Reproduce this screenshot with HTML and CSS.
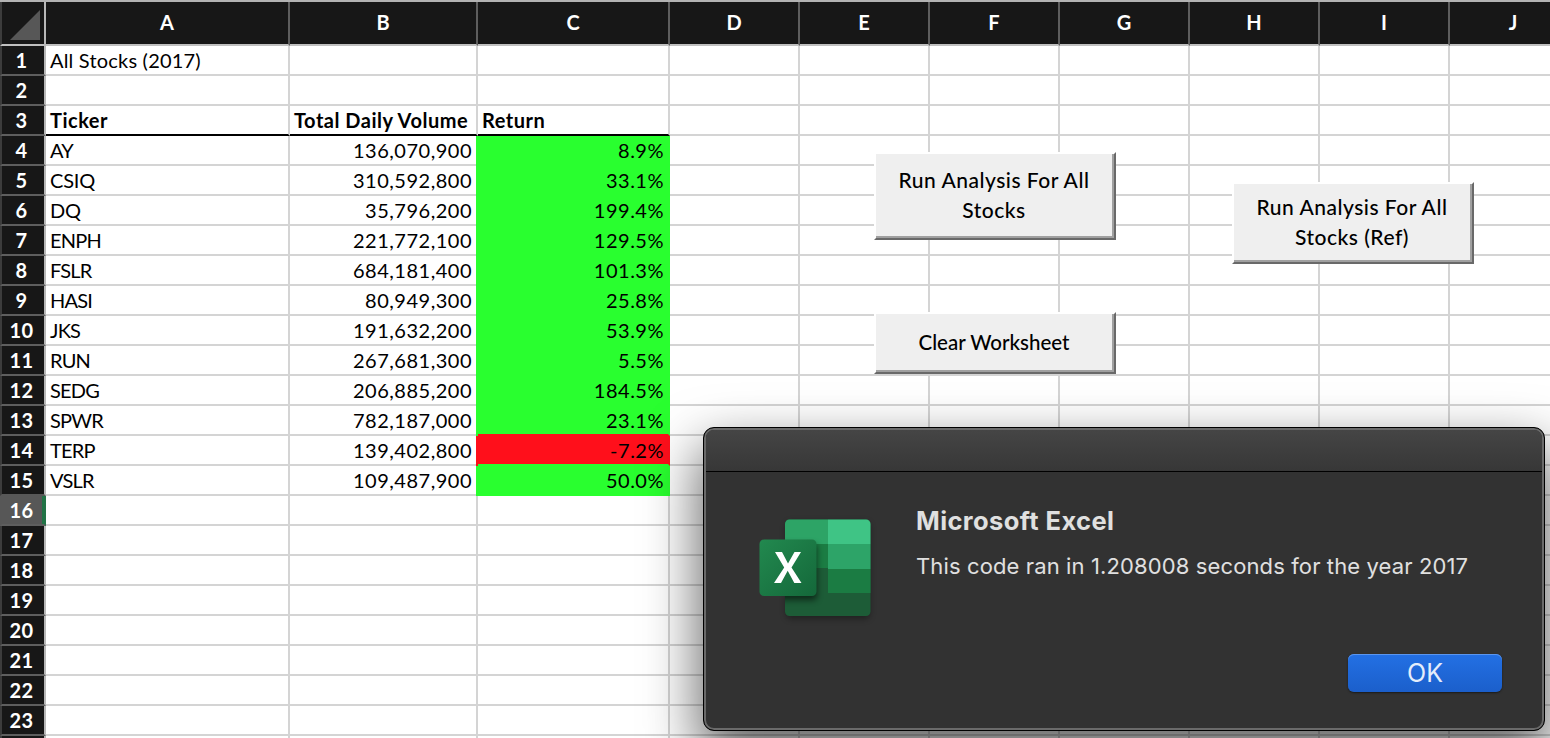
FILE: index.html
```
<!DOCTYPE html>
<html lang="en">
<head>
<meta charset="utf-8">
<title>All Stocks (2017)</title>
<link rel="stylesheet" href="styles.css">
</head>
<body>
<main class="workbook">
<table class="sheet">
<colgroup><col class="c-num"><col class="c-a"><col class="c-b"><col class="c-c"><col class="c-n"><col class="c-n"><col class="c-n"><col class="c-n"><col class="c-n"><col class="c-n"><col class="c-n"></colgroup>
<thead>
<tr><th class="corner"><svg width="42" height="42" viewBox="0 0 42 42"><path d="M38 8V38H8Z" fill="#575757"/></svg></th><th>A</th><th>B</th><th>C</th><th>D</th><th>E</th><th>F</th><th>G</th><th>H</th><th>I</th><th>J</th></tr>
</thead>
<tbody>
<tr><th>1</th><td class="title">All Stocks (2017)<td><td><td><td><td><td><td><td><td></tr>
<tr><th>2</th><td><td><td><td><td><td><td><td><td><td></tr>
<tr class="labels"><th>3</th><td>Ticker<td>Total Daily Volume<td>Return<td><td><td><td><td><td><td></tr>
<tr><th>4</th><td>AY<td class="num">136,070,900<td class="num up">8.9%<td><td><td><td><td><td><td></tr>
<tr><th>5</th><td class="wide">CSIQ<td class="num">310,592,800<td class="num up">33.1%<td><td><td><td><td><td><td></tr>
<tr><th>6</th><td class="wide">DQ<td class="num">35,796,200<td class="num up">199.4%<td><td><td><td><td><td><td></tr>
<tr><th>7</th><td>ENPH<td class="num">221,772,100<td class="num up">129.5%<td><td><td><td><td><td><td></tr>
<tr><th>8</th><td>FSLR<td class="num">684,181,400<td class="num up">101.3%<td><td><td><td><td><td><td></tr>
<tr><th>9</th><td>HASI<td class="num">80,949,300<td class="num up">25.8%<td><td><td><td><td><td><td></tr>
<tr><th>10</th><td>JKS<td class="num">191,632,200<td class="num up">53.9%<td><td><td><td><td><td><td></tr>
<tr><th>11</th><td>RUN<td class="num">267,681,300<td class="num up">5.5%<td><td><td><td><td><td><td></tr>
<tr><th>12</th><td>SEDG<td class="num">206,885,200<td class="num up">184.5%<td><td><td><td><td><td><td></tr>
<tr><th>13</th><td>SPWR<td class="num">782,187,000<td class="num up before-down">23.1%<td><td><td><td><td><td><td></tr>
<tr><th>14</th><td>TERP<td class="num">139,402,800<td class="num down">-7.2%<td><td><td><td><td><td><td></tr>
<tr class="before-active"><th>15</th><td>VSLR<td class="num">109,487,900<td class="num up">50.0%<td><td><td><td><td><td><td></tr>
<tr class="active"><th>16</th><td><td><td><td><td><td><td><td><td><td></tr>
<tr><th>17</th><td><td><td><td><td><td><td><td><td><td></tr>
<tr><th>18</th><td><td><td><td><td><td><td><td><td><td></tr>
<tr><th>19</th><td><td><td><td><td><td><td><td><td><td></tr>
<tr><th>20</th><td><td><td><td><td><td><td><td><td><td></tr>
<tr><th>21</th><td><td><td><td><td><td><td><td><td><td></tr>
<tr><th>22</th><td><td><td><td><td><td><td><td><td><td></tr>
<tr><th>23</th><td><td><td><td><td><td><td><td><td><td></tr>
<tr><th></th><td><td><td><td><td><td><td><td><td><td></tr>
</tbody>
</table>

<button class="macro run">Run Analysis For All<br>Stocks</button>
<button class="macro run-ref">Run Analysis For All<br>Stocks (Ref)</button>
<button class="macro clear">Clear Worksheet</button>

<section class="dialog" role="dialog">
  <div class="titlebar"></div>
  <div class="content">
    <svg class="logo" width="130" height="120" viewBox="0 0 130 120">
      <defs>
        <linearGradient id="tile" x1="0" y1="0" x2="1" y2="1"><stop offset="0" stop-color="#22894f"/><stop offset="1" stop-color="#14683a"/></linearGradient>
        <clipPath id="book"><rect x="35" y="9.500" width="85.500" height="96.500" rx="4.500"/></clipPath>
        <filter id="soft" x="-30%" y="-30%" width="160%" height="160%"><feGaussianBlur stdDeviation="3"/></filter>
      </defs>
      <rect x="36" y="12" width="84" height="97" rx="5" fill="#000" opacity=".35" filter="url(#soft)"/>
      <g clip-path="url(#book)">
        <path fill="#1d5c37" d="M35 9h86v97H35z"/>
        <path fill="#2da466" d="M35 9h43v25H35z"/>
        <path fill="#3fc485" d="M78 9h43v25H78z"/>
        <path fill="#1b7c43" d="M35 34h43v24H35z"/>
        <path fill="#2da468" d="M78 34h43v25H78z"/>
        <path fill="#1b7c43" d="M78 59h43v24H78z"/>
        <rect x="12" y="34" width="55" height="56" rx="4" fill="#000" opacity=".55" filter="url(#soft)"/>
      </g>
      <rect x="9.500" y="29.500" width="57" height="56.500" rx="4.500" fill="url(#tile)"/>
      <path fill="#fff" d="M25 42h7l6 11.500L44.500 42H51L41.500 57.500 51.500 73h-7.200L37.700 60.700 31 73h-7L34.200 57.500Z"/>
    </svg>
    <div class="message">
      <h1>Microsoft Excel</h1>
      <p>This code ran in 1.208008 seconds for the year 2017</p>
    </div>
  </div>
  <div class="actions"><button class="ok">OK</button></div>
</section>
</main>
</body>
</html>
```
FILE: styles.css
```
* { box-sizing: border-box; }
body { margin: 0; background: #fff; }
.workbook { position: relative; width: 1550px; height: 738px; overflow: hidden; font-family: Lato, Carlito, sans-serif; }

.sheet { table-layout: fixed; width: 1580px; border-collapse: separate; border-spacing: 0; border-top: 2px solid #b3b3b3; font-size: 20px; line-height: 28px; color: #000; }
.c-num { width: 46px; }
.c-a { width: 244px; }
.c-b { width: 188px; }
.c-c { width: 192px; }
.c-n { width: 130px; }

.sheet th { padding: 0; background: #171717; color: #fff; font-weight: 700; text-align: center; }
thead th { height: 44px; border-right: 2px solid #5e5e5e; border-bottom: 2px solid #c0c0c0; }
.sheet thead th:not(.corner) { padding-bottom: 2px; }
.sheet thead th:last-child { padding-right: 2px; }
thead .corner { border-left: 2px solid #3c3c3c; border-right-color: #b8b8b8; }
.corner svg { display: block; }
tbody th { height: 30px; border-left: 2px solid #3c3c3c; border-right: 2px solid #b8b8b8; border-bottom: 2px solid #5e5e5e; letter-spacing: .3px; }
.sheet tbody th { padding-right: 3px; }
.sheet td { height: 30px; padding: 0 4px; border-right: 2px solid #d4d4d4; border-bottom: 2px solid #d4d4d4; white-space: nowrap; letter-spacing: -.8px; }
.sheet .wide { letter-spacing: -.2px; }
.sheet .title { letter-spacing: .2px; }
.sheet .num { text-align: right; letter-spacing: .5px; }

.sheet .labels td { font-weight: 700; letter-spacing: .5px; }
.labels td:nth-child(-n+4) { border-bottom-color: #000; }
.sheet .up { background: #29ff2f; border-color: #29ff2f; box-shadow: -2px 0 #29ff2f; }
.sheet .down { background: #ff0f1b; border-right-color: #ff0f1b; border-bottom: 0; padding-bottom: 2px; box-shadow: -2px 0 #ff0f1b, 0 0 #29ff2f; }
.sheet .down { border-bottom: 2px solid #29ff2f; padding-bottom: 0; }
.sheet .before-down { border-bottom-color: #ff0f1b; }
.before-active th { border-bottom-color: #575757; }
.active th { background: #575757; border-left-color: #575757; box-shadow: inset -2px 0 #217346; border-right-color: #217346; }

.macro { position: absolute; padding: 0 2px 2px 0; border: 2px solid #fff; border-right-color: #696969; border-bottom-color: #696969; box-shadow: inset -2px -2px #a0a0a0; background: #efefef; color: #000; font: 500 21px/30px Lato, Carlito, sans-serif; letter-spacing: .5px; text-align: center; }
.run { left: 874px; top: 152px; width: 242px; height: 88px; }
.run-ref { left: 1232px; top: 182px; width: 242px; height: 82px; }
.clear { left: 874px; top: 312px; width: 242px; height: 62px; font-size: 20.5px; letter-spacing: 0; }

.dialog { position: absolute; left: 703px; top: 427px; width: 842px; height: 304px; display: flex; flex-direction: column; border: 1px solid #000; border-radius: 11px; background: #323232; box-shadow: inset 0 0 0 2px #6a6a6a, 0 24px 54px 4px rgba(0,0,0,.6); font-family: Inter, sans-serif; color: #e0e0e0; }
.titlebar { flex: none; margin: 2px 2px 0; height: 42px; border-bottom: 1px solid #000; border-radius: 8px 8px 0 0; background: linear-gradient(#454545, #373737); }
.content { display: flex; gap: 36px; padding: 38px 0 0 46px; height: 182px; }
.message { margin-top: -6px; }
.message h1 { margin: 0; font-size: 25.5px; line-height: 34px; font-weight: 700; letter-spacing: .4px; }
.message p { margin: 13px 0 0; font-size: 22px; line-height: 30px; letter-spacing: .12px; white-space: nowrap; }
.actions { display: flex; justify-content: flex-end; padding-right: 42px; }
.ok { width: 154px; height: 38px; padding: 0; border: 0; border-radius: 6px; background: linear-gradient(#2370e4, #1b5fcb); box-shadow: inset 0 1px #5b96ee, 0 1px 2px rgba(0,0,0,.5); color: #e4edfb; font: 400 25px/38px Inter, sans-serif; }
```
